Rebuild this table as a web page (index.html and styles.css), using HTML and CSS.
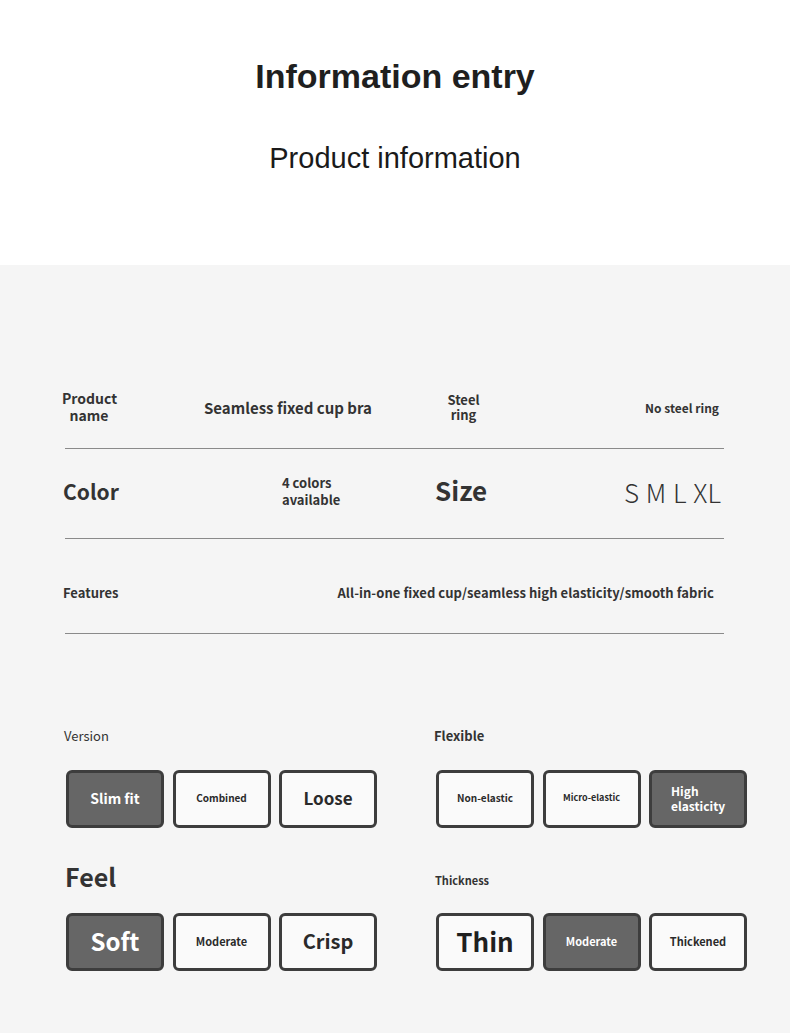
FILE: index.html
```
<!DOCTYPE html>
<html lang="en">
<head>
    <meta charset="UTF-8" />
    <title>Information entry</title>
    <link rel="stylesheet" href="styles.css">
</head>
<body>
<header class="intro">
    <h1>Information entry</h1>
    <h2>Product information</h2>
</header>

<main class="sheet">
    <section class="specs">
        <div class="spec-row row-name">
            <div class="key key-stack">Product<br>name</div>
            <div class="val val-name">Seamless fixed cup bra</div>
            <div class="key key-steel">Steel<br>ring</div>
            <div class="val val-right val-steel">No steel ring</div>
        </div>
        <div class="spec-row row-color">
            <div class="key key-color">Color</div>
            <div class="val val-colors">4 colors<br>available</div>
            <div class="key key-size">Size</div>
            <div class="val val-right val-size">S M L XL</div>
        </div>
        <div class="spec-row row-features">
            <div class="key key-features">Features</div>
            <div class="val val-right val-features">All-in-one fixed cup/seamless high elasticity/smooth fabric</div>
        </div>
    </section>

    <section class="options">
        <div class="group">
            <div class="group-label lbl-version">Version</div>
            <div class="choices">
                <div class="choice on fs-slim">Slim fit</div>
                <div class="choice fs-combined">Combined</div>
                <div class="choice fs-loose">Loose</div>
            </div>
        </div>
        <div class="group">
            <div class="group-label lbl-flexible">Flexible</div>
            <div class="choices">
                <div class="choice fs-nonelastic">Non-elastic</div>
                <div class="choice fs-micro">Micro-elastic</div>
                <div class="choice on fs-high">High<br>elasticity</div>
            </div>
        </div>
        <div class="group">
            <div class="group-label lbl-feel">Feel</div>
            <div class="choices">
                <div class="choice on fs-soft">Soft</div>
                <div class="choice fs-moderate">Moderate</div>
                <div class="choice fs-crisp">Crisp</div>
            </div>
        </div>
        <div class="group">
            <div class="group-label lbl-thickness">Thickness</div>
            <div class="choices">
                <div class="choice fs-thin">Thin</div>
                <div class="choice on fs-moderate">Moderate</div>
                <div class="choice fs-thickened">Thickened</div>
            </div>
        </div>
    </section>
</main>
</body>
</html>
```

FILE: styles.css
```
body {
    margin: 0;
    padding: 0;
    background: #f5f5f5;
    color: #333;
    font-family: "Noto Sans CJK SC", "Noto Sans", sans-serif;
}

/* top white band */
.intro {
    background: #fff;
    height: 265px;
    text-align: center;
    font-family: "Liberation Sans", Arial, sans-serif;
    color: #1f1f1f;
    padding-top: 55px;
    box-sizing: border-box;
}

.intro h1 {
    margin: 0;
    font-size: 34px;
    line-height: 42px;
    font-weight: bold;
}

.intro h2 {
    margin: 43px 0 0;
    font-size: 29px;
    line-height: 36px;
    font-weight: normal;
    color: #1a1a1a;
}

.sheet {
    padding-top: 107px;
    height: 768px;
    box-sizing: border-box;
}

/* spec table */
.specs {
    width: 659px;
    margin-left: 65px;
}

.spec-row {
    display: grid;
    grid-template-columns: 139px 231px 75px 1fr;
    align-items: center;
    border-bottom: 1px solid #8a8a8a;
    font-weight: bold;
}

.row-name {
    height: 70px;
    padding-bottom: 6px;
}

.row-color {
    height: 84px;
    padding-bottom: 5px;
}

.row-features {
    height: 82px;
    padding-top: 12px;
    grid-template-columns: 139px 1fr;
}

.key-stack {
    font-size: 14px;
    line-height: 17px;
    text-align: center;
    width: 54px;
    margin-left: -3px;
}

.val-name {
    font-size: 15px;
}

.key-steel {
    font-size: 13px;
    line-height: 15px;
    text-align: center;
    width: 33px;
    margin-left: 12px;
}

.val-right {
    text-align: right;
}

.val-steel {
    font-size: 12px;
    padding-right: 5px;
}

.key-color {
    font-size: 21px;
    margin-left: -2px;
}

.val-colors {
    font-size: 13px;
    line-height: 17px;
    padding-left: 78px;
}

.key-size {
    font-size: 26px;
    margin-top: -4px;
}

.val-size {
    font-size: 26px;
    font-weight: 300;
    padding-right: 3px;
    word-spacing: 1px;
}

.key-features {
    font-size: 13px;
    margin-left: -2px;
}

.val-features {
    font-size: 13px;
    letter-spacing: 0.05px;
    padding-right: 10px;
}

/* option groups */
.options {
    display: grid;
    grid-template-columns: 311px 311px;
    column-gap: 59px;
    margin: 86px 0 0 66px;
}

.group-label {
    height: 30px;
    display: flex;
    align-items: center;
    margin-bottom: 20px;
}

.group:nth-child(n+3) .group-label {
    margin-top: 35px;
}

.lbl-version {
    font-size: 13px;
    font-weight: normal;
    margin-left: -2px;
}

.lbl-flexible {
    font-size: 13px;
    font-weight: bold;
    margin-left: -2px;
}

.lbl-feel {
    font-size: 25px;
    font-weight: bold;
    margin-left: -1px;
    padding-bottom: 4px;
    box-sizing: border-box;
}

.lbl-thickness {
    font-size: 11px;
    font-weight: bold;
    margin-left: -1px;
    padding-top: 4px;
    box-sizing: border-box;
}

.choices {
    display: flex;
    gap: 8.5px;
}

.choice {
    width: 98px;
    height: 58px;
    box-sizing: border-box;
    border: 3px solid #3d3d3d;
    border-radius: 6px;
    background: #fafafa;
    display: flex;
    align-items: center;
    justify-content: center;
    padding-bottom: 3px;
    font-weight: bold;
    color: #2a2a2a;
    text-align: center;
}

.choice.on {
    background: #666;
    color: #fff;
}

.fs-slim { font-size: 14px; }
.fs-combined { font-size: 10px; }
.fs-loose { font-size: 17px; }
.fs-nonelastic { font-size: 10px; }
.fs-micro { font-size: 9px; }
.fs-high {
    font-size: 12px;
    line-height: 15px;
    text-align: left;
    justify-content: flex-start;
    padding-left: 19px;
}
.fs-soft { font-size: 24px; }
.fs-moderate { font-size: 11px; }
.fs-crisp { font-size: 20px; }
.fs-thin { font-size: 26px; color: #1f1f1f; }
.fs-thickened { font-size: 11px; }
```
